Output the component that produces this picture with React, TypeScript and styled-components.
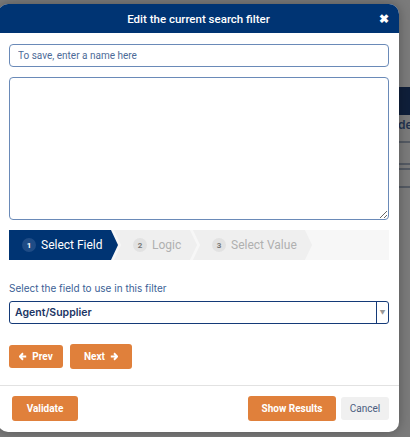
import React, { FC } from "react";
import styled, { createGlobalStyle } from "styled-components";

const GlobalStyle = createGlobalStyle`
  html, body {
    margin: 0;
    padding: 0;
    width: 410px;
    height: 437px;
    overflow: hidden;
    font-family: Inter, "Noto Sans", sans-serif;
  }
`;

const Page = styled.div`
  position: relative;
  width: 410px;
  height: 437px;
  background: #7b7b7b;
  overflow: hidden;
`;

// dimmed page behind the modal
const Behind = styled.div`
  display: flex;
  flex-direction: column;
  padding-top: 87px;
  padding-left: 380px;
`;
const BehindBar = styled.div`
  height: 28px;
  background: #0f1f3a;
`;
const BehindText = styled.div`
  font-size: 12px;
  font-weight: 600;
  color: #22334f;
  padding: 2px 0 0 18px;
  height: 16px;
  overflow: hidden;
`;
const BehindLine = styled.div<{ $gap: number }>`
  margin-top: ${(p) => p.$gap}px;
  height: 2px;
  background: #545a63;
`;

const Modal = styled.div`
  position: absolute;
  top: 4px;
  left: -2px;
  width: 401px;
  height: 428px;
  background: #ffffff;
  border-radius: 10px;
  overflow: hidden;
  display: flex;
  flex-direction: column;
  box-shadow: 0 0 12px rgba(0, 0, 0, 0.3);
`;

const Header = styled.div`
  position: relative;
  height: 29px;
  background: #003473;
  color: #ffffff;
  display: flex;
  align-items: center;
  justify-content: center;
  font-family: Roboto, sans-serif;
  font-size: 11.5px;
  font-weight: 500;
`;

const Close = styled.span`
  position: absolute;
  right: 10px;
  top: 7px;
  font-size: 12px;
  font-weight: 900;
  line-height: 16px;
`;

const Body = styled.div`
  display: flex;
  flex-direction: column;
  padding: 11px 10px 0 11px;
`;

const NameInput = styled.input`
  box-sizing: border-box;
  height: 23px;
  width: 380px;
  border: 1px solid #6a8ab8;
  border-radius: 4px;
  padding: 0 8px;
  font-family: Roboto, sans-serif;
  font-size: 10px;
  color: #2c4a7a;
  outline: none;
  &::placeholder {
    color: #4d6b98;
  }
`;

const Notes = styled.textarea`
  box-sizing: border-box;
  margin-top: 10px;
  width: 380px;
  height: 143px;
  border: 1px solid #6a8ab8;
  border-radius: 4px;
  resize: both;
  outline: none;
  font-family: inherit;
`;

const Stepper = styled.div`
  margin-top: 10px;
  display: flex;
  height: 30px;
  width: 380px;
  background: #f7f7f7;
`;

const Step = styled.div<{ $active?: boolean; $width: number; $first?: boolean }>`
  box-sizing: border-box;
  width: ${(p) => p.$width}px;
  margin-left: ${(p) => (p.$first ? 0 : -4)}px;
  padding-left: ${(p) => (p.$first ? 13 : 19)}px;
  display: flex;
  align-items: center;
  gap: 5px;
  font-family: Roboto, sans-serif;
  font-size: 12px;
  color: ${(p) => (p.$active ? "#ffffff" : "#b0b0b0")};
  background: ${(p) => (p.$active ? "#003473" : "#efefef")};
  clip-path: polygon(
    0 0,
    calc(100% - 7px) 0,
    100% 50%,
    calc(100% - 7px) 100%,
    0 100%,
    ${(p) => (p.$first ? "0 0" : "7px 50%")}
  );
`;

const Badge = styled.span<{ $active?: boolean }>`
  width: 14px;
  height: 14px;
  border-radius: 50%;
  display: inline-flex;
  align-items: center;
  justify-content: center;
  font-size: 8px;
  font-weight: 700;
  color: ${(p) => (p.$active ? "#ffffff" : "#777777")};
  background: ${(p) => (p.$active ? "#1f4c86" : "#e2e2e2")};
`;

const FieldLabel = styled.div`
  margin-top: 22px;
  font-size: 10px;
  color: #3c5f96;
`;

const SelectBox = styled.div`
  margin-top: 7px;
  box-sizing: border-box;
  width: 380px;
  height: 23px;
  border: 1.5px solid #143a78;
  border-radius: 3px;
  display: flex;
  align-items: center;
`;

const SelectValue = styled.div`
  flex: 1;
  padding-left: 5px;
  font-size: 10.5px;
  font-weight: 600;
  color: #1b3564;
`;

const SelectArrow = styled.div`
  width: 11px;
  height: 100%;
  border-left: 1.5px solid #143a78;
  display: flex;
  align-items: center;
  justify-content: center;
  font-size: 6px;
  color: #999999;
`;

const NavRow = styled.div`
  margin-top: 20px;
  display: flex;
  align-items: center;
  gap: 7px;
  padding-bottom: 16px;
`;

const OrangeButton = styled.button<{ $w: number; $h: number }>`
  width: ${(p) => p.$w}px;
  height: ${(p) => p.$h}px;
  border: none;
  border-radius: 3px;
  background: #e0803b;
  color: #ffffff;
  font-family: Roboto, sans-serif;
  font-size: 10px;
  font-weight: 700;
  display: flex;
  align-items: center;
  justify-content: center;
  gap: 5px;
  padding: 0;
`;

const Footer = styled.div`
  border-top: 1px solid #e2e2e2;
  display: flex;
  align-items: center;
  padding: 10px 10px 0 14px;
  gap: 5px;
`;

const Spacer = styled.div`
  flex: 1;
`;

const CancelButton = styled.button`
  width: 48px;
  height: 23px;
  border: none;
  border-radius: 3px;
  background: #f0f0f0;
  color: #4b5d7f;
  font-family: Roboto, sans-serif;
  font-size: 10px;
  padding: 0;
`;

const ArrowIcon: FC<{ dir: "left" | "right" }> = ({ dir }) => (
  <svg width="8" height="9" viewBox="0 0 10 10">
    <path
      d={
        dir === "left"
          ? "M5 1 L1 5 L5 9 M1.5 5 H9"
          : "M5 1 L9 5 L5 9 M8.5 5 H1"
      }
      fill="none"
      stroke="#ffffff"
      strokeWidth="2.4"
      strokeLinejoin="miter"
    />
  </svg>
);

const App: FC = () => {
  return (
    <Page>
      <GlobalStyle />
      <Behind>
        <BehindBar />
        <BehindText>de</BehindText>
        <BehindLine $gap={8} />
        <BehindLine $gap={20} />
        <BehindLine $gap={3} />
        <BehindLine $gap={16} />
      </Behind>
      <Modal>
        <Header>
          Edit the current search filter
          <Close>✖</Close>
        </Header>
        <Body>
          <NameInput placeholder="To save, enter a name here" />
          <Notes />
          <Stepper>
            <Step $active $first $width={109}>
              <Badge $active>1</Badge>
              Select Field
            </Step>
            <Step $width={83}>
              <Badge>2</Badge>
              Logic
            </Step>
            <Step $width={119}>
              <Badge>3</Badge>
              Select Value
            </Step>
          </Stepper>
          <FieldLabel>Select the field to use in this filter</FieldLabel>
          <SelectBox>
            <SelectValue>Agent/Supplier</SelectValue>
            <SelectArrow>▼</SelectArrow>
          </SelectBox>
          <NavRow>
            <OrangeButton $w={54} $h={23}>
              <ArrowIcon dir="left" />
              Prev
            </OrangeButton>
            <OrangeButton $w={62} $h={25}>
              Next
              <ArrowIcon dir="right" />
            </OrangeButton>
          </NavRow>
        </Body>
        <Footer>
          <OrangeButton $w={66} $h={25}>
            Validate
          </OrangeButton>
          <Spacer />
          <OrangeButton $w={88} $h={25}>
            Show Results
          </OrangeButton>
          <CancelButton>Cancel</CancelButton>
        </Footer>
      </Modal>
    </Page>
  );
};

export default App;
